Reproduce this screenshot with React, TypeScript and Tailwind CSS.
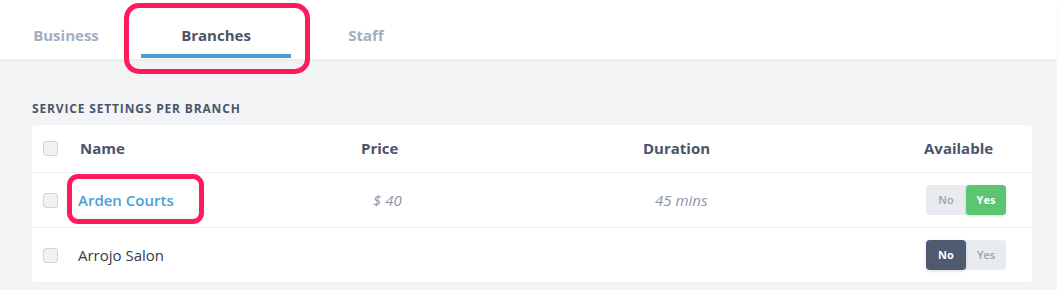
import React from "react"

const font = { fontFamily: '"Open Sans", "Liberation Sans", sans-serif' }

function Checkbox() {
  return <div className="w-[15px] h-[15px] rounded-[3px] border border-[#cfd3da] bg-[#f0f1f3]" />
}

function Toggle({ value }: { value: boolean }) {
  return (
    <div className="flex w-[80px] h-[30px] rounded-[4px] bg-[#e8ebf0] text-[11px] font-bold">
      <div
        className={
          value
            ? "flex-1 flex items-center justify-center text-[#9aa3b2] font-semibold"
            : "flex-1 flex items-center justify-center rounded-[4px] bg-[#4f5a71] text-white shadow-[0_1px_3px_rgba(0,0,0,0.15)]"
        }
      >
        No
      </div>
      <div
        className={
          value
            ? "flex-1 flex items-center justify-center rounded-[4px] bg-[#5bc56f] text-white shadow-[0_1px_3px_rgba(0,0,0,0.15)]"
            : "flex-1 flex items-center justify-center text-[#9aa3b2] font-semibold"
        }
      >
        Yes
      </div>
    </div>
  )
}

export default function App() {
  const rows = [
    { name: "Arden Courts", link: true, price: "$ 40", duration: "45 mins", available: true },
    { name: "Arrojo Salon", link: false, price: "", duration: "", available: false },
  ]

  return (
    <div className="w-[1060px] h-[290px] overflow-hidden bg-white relative" style={font}>
      <div className="w-[1057px] h-[290px] bg-[#f3f4f6]">
        {/* Tabs */}
        <div className="h-[59px] bg-white shadow-[0_2px_6px_rgba(0,0,0,0.04)] flex -ml-[9px] relative">
          {["Business", "Branches", "Staff"].map((t) => (
            <div key={t} className="w-[150px] h-full flex flex-col items-center justify-end">
              <span
                className={
                  t === "Branches"
                    ? "text-[15px] font-bold text-[#4a5568] mb-[8px]"
                    : "text-[15px] font-bold text-[#a3aec0] mb-[8px]"
                }
              >
                {t}
              </span>
              <div className={t === "Branches" ? "w-full h-[4px] mb-[1px] bg-[#4b9fd5]" : "w-full h-[4px] mb-[1px]"} />
            </div>
          ))}
        </div>

        <div className="px-[32px] pt-[43px]">
          <div className="text-[12px] font-bold tracking-[0.07em] text-[#4a5568] leading-[14px] mb-[9px]">
            SERVICE SETTINGS PER BRANCH
          </div>

          <div className="bg-white rounded-[4px] shadow-[0_0_2px_rgba(0,0,0,0.06)] w-[1000px]">
            <div className="grid grid-cols-[48px_281px_282px_281px_1fr] items-center h-[48px] border-b border-[#eef0f2] text-[15px] font-bold text-[#4a5568]">
              <div className="pl-[11px]">
                <Checkbox />
              </div>
              <div>Name</div>
              <div>Price</div>
              <div>Duration</div>
              <div>Available</div>
            </div>
            {rows.map((r) => (
              <div
                key={r.name}
                className="grid grid-cols-[46px_295px_282px_271px_1fr] items-center h-[55px] border-b border-[#eef0f2] text-[15px]"
              >
                <div className="pl-[11px]">
                  <Checkbox />
                </div>
                <div className={r.link ? "font-semibold text-[#4b9fd5]" : "text-[#333b4a]"}>{r.name}</div>
                <div className="italic text-[#8d96a7]">{r.price}</div>
                <div className="italic text-[#8d96a7]">{r.duration}</div>
                <div>
                  <Toggle value={r.available} />
                </div>
              </div>
            ))}
          </div>
        </div>
      </div>

      {/* annotation highlights */}
      <div className="absolute left-[124px] top-[3px] w-[186px] h-[71px] rounded-[15px] border-[5px] border-[#ff1a5c]" />
      <div className="absolute left-[67px] top-[174px] w-[137px] h-[50px] rounded-[11px] border-[5px] border-[#ff1a5c]" />
    </div>
  )
}
